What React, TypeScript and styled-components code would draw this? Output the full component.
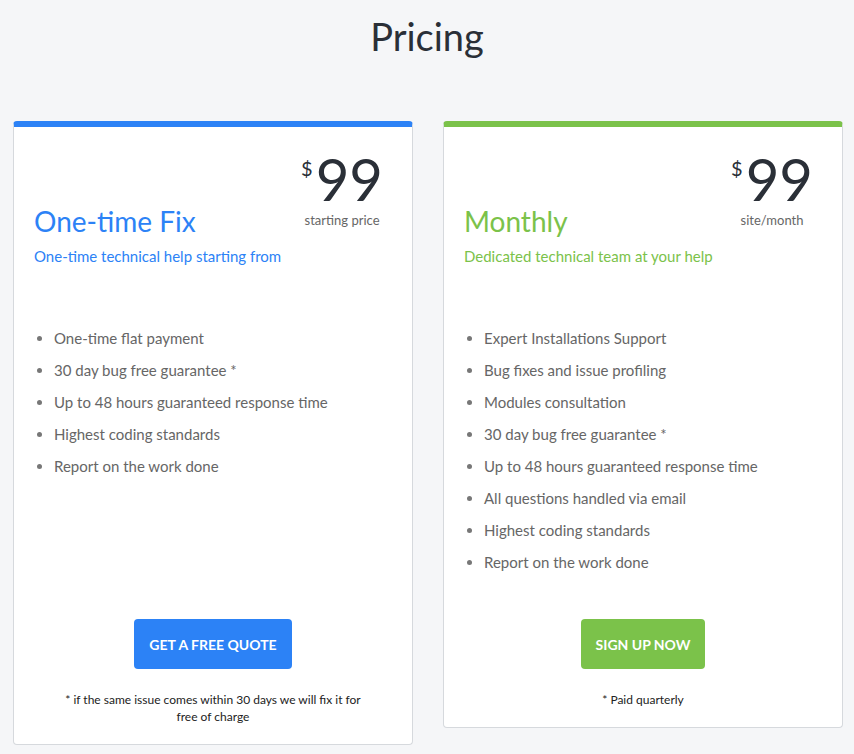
import styled, { createGlobalStyle } from "styled-components";

const GlobalStyle = createGlobalStyle`
  * { box-sizing: border-box; }
  body {
    margin: 0;
    background: #f5f6f8;
    font-family: Lato, "Noto Sans", Arial, sans-serif;
    color: #2a2f37;
  }
`;

const Page = styled.div`
  min-height: 754px;
  padding-top: 14px;
`;

const Title = styled.h1`
  margin: 0;
  text-align: center;
  font-size: 38px;
  font-weight: 400;
  line-height: 1.2;
  color: #2a2f37;
`;

const Cards = styled.div`
  display: flex;
  align-items: flex-start;
  gap: 30px;
  margin-top: 61px;
  padding-left: 13px;
`;

const Card = styled.div<{ $accent: string }>`
  width: 400px;
  background: #fff;
  border: 1px solid #d6d9dd;
  border-top: 6px solid ${(p) => p.$accent};
  border-radius: 4px;
  padding: 0 20px 19px;
  display: flex;
  flex-direction: column;
`;

const Header = styled.div`
  display: flex;
  justify-content: space-between;
  align-items: flex-start;
  padding-right: 9px;
`;

const Heading = styled.div`
  margin-top: 78px;
`;

const PlanName = styled.h2<{ $accent: string }>`
  margin: 0;
  font-size: 28px;
  font-weight: 400;
  line-height: 1.2;
  color: ${(p) => p.$accent};
`;

const PlanLead = styled.p<{ $accent: string }>`
  margin: 8px 0 0;
  font-size: 15px;
  line-height: 20px;
  color: ${(p) => p.$accent};
`;

const PriceBlock = styled.div`
  margin-top: 23px;
  display: flex;
  flex-direction: column;
  align-items: center;
`;

const Price = styled.div`
  display: flex;
  align-items: flex-start;
  font-size: 58px;
  line-height: 1;
  color: #2a2f37;
`;

const Currency = styled.span`
  font-size: 20px;
  line-height: 1;
  margin-top: 8px;
  margin-right: 3px;
`;

const PriceNote = styled.div`
  margin-top: 4px;
  font-size: 13px;
  line-height: 16px;
  color: #666;
`;

const Features = styled.ul`
  list-style: disc;
  margin: 56px 0 0;
  padding-left: 20px;
  min-height: 256px;
  color: #666;
`;

const Feature = styled.li`
  font-size: 15px;
  line-height: 32px;
  &::marker { color: #777; }
`;

const Button = styled.button<{ $accent: string }>`
  align-self: center;
  margin-top: 41px;
  height: 50px;
  padding: 0 15px;
  border: none;
  border-radius: 4px;
  background: ${(p) => p.$accent};
  color: #fff;
  font-family: inherit;
  font-size: 14px;
  font-weight: 700;
  text-transform: uppercase;
  cursor: pointer;
`;

const Footnote = styled.p`
  margin: 22px auto 0;
  max-width: 300px;
  text-align: center;
  font-size: 12px;
  line-height: 17px;
  color: #222;
`;

type Plan = {
  name: string;
  lead: string;
  note: string;
  accent: string;
  features: string[];
  cta: string;
  footnote: string;
};

const plans: Plan[] = [
  {
    name: "One-time Fix",
    lead: "One-time technical help starting from",
    note: "starting price",
    accent: "#2c82f6",
    features: [
      "One-time flat payment",
      "30 day bug free guarantee *",
      "Up to 48 hours guaranteed response time",
      "Highest coding standards",
      "Report on the work done",
    ],
    cta: "Get a free quote",
    footnote: "* if the same issue comes within 30 days we will fix it for free of charge",
  },
  {
    name: "Monthly",
    lead: "Dedicated technical team at your help",
    note: "site/month",
    accent: "#7bc24a",
    features: [
      "Expert Installations Support",
      "Bug fixes and issue profiling",
      "Modules consultation",
      "30 day bug free guarantee *",
      "Up to 48 hours guaranteed response time",
      "All questions handled via email",
      "Highest coding standards",
      "Report on the work done",
    ],
    cta: "Sign up now",
    footnote: "* Paid quarterly",
  },
];

function App() {
  return (
    <Page>
      <GlobalStyle />
      <Title>Pricing</Title>
      <Cards>
        {plans.map((plan) => (
          <Card key={plan.name} $accent={plan.accent}>
            <Header>
              <Heading>
                <PlanName $accent={plan.accent}>{plan.name}</PlanName>
                <PlanLead $accent={plan.accent}>{plan.lead}</PlanLead>
              </Heading>
              <PriceBlock>
                <Price>
                  <Currency>$</Currency>99
                </Price>
                <PriceNote>{plan.note}</PriceNote>
              </PriceBlock>
            </Header>
            <Features>
              {plan.features.map((f) => (
                <Feature key={f}>{f}</Feature>
              ))}
            </Features>
            <Button $accent={plan.accent}>{plan.cta}</Button>
            <Footnote>{plan.footnote}</Footnote>
          </Card>
        ))}
      </Cards>
    </Page>
  );
}

export default App;
